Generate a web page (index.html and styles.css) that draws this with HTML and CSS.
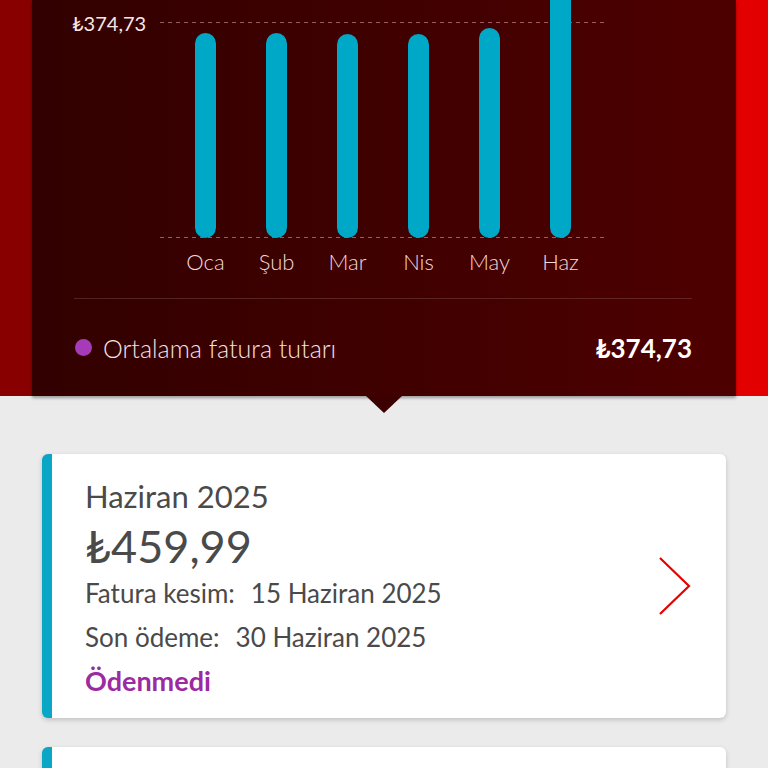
FILE: index.html
```html
<!DOCTYPE html>
<html lang="tr">
<head>
<meta charset="utf-8">
<title>Fatura</title>
<link rel="stylesheet" href="styles.css">
</head>
<body>
<div class="page">
  <section class="hero">
    <div class="strip strip-left"></div>
    <div class="panel">
      <div class="chart">
        <div class="axis-label">₺374,73</div>
        <div class="plot-wrap">
          <div class="plot">
            <div class="col"><div class="bar" style="height:205px"></div></div>
            <div class="col"><div class="bar" style="height:205px"></div></div>
            <div class="col"><div class="bar" style="height:204px"></div></div>
            <div class="col"><div class="bar" style="height:204px"></div></div>
            <div class="col"><div class="bar" style="height:210px"></div></div>
            <div class="col"><div class="bar" style="height:280px"></div></div>
          </div>
          <div class="months">
            <span>Oca</span><span>Şub</span><span>Mar</span><span>Nis</span><span>May</span><span>Haz</span>
          </div>
        </div>
      </div>
      <div class="legend">
        <div class="legend-left"><span class="dot"></span><span>Ortalama fatura tutarı</span></div>
        <div class="legend-value">₺374,73</div>
      </div>
      <div class="notch"></div>
    </div>
    <div class="strip strip-right"></div>
  </section>

  <section class="cards">
    <article class="card">
      <div class="card-body">
        <div class="card-month">Haziran 2025</div>
        <div class="card-amount">₺459,99</div>
        <div class="card-line">Fatura kesim:<span class="val">15 Haziran 2025</span></div>
        <div class="card-line">Son ödeme:<span class="val">30 Haziran 2025</span></div>
        <div class="card-status">Ödenmedi</div>
      </div>
      <svg class="chevron" width="34" height="58" viewBox="0 0 34 58" aria-hidden="true">
        <path d="M2 1 L31 29 L2 57" fill="none" stroke="#e60000" stroke-width="2.2" stroke-linejoin="miter"/>
      </svg>
    </article>
    <article class="card card-next"></article>
  </section>
</div>
</body>
</html>
```

FILE: styles.css
```css
* { box-sizing: border-box; }
html, body { margin: 0; padding: 0; }
body {
  background: #ebebeb;
  font-family: Lato, "Noto Sans", "DejaVu Sans", sans-serif;
  overflow: hidden;
  height: 768px;
}
.page { width: 768px; }

.hero {
  display: flex;
  height: 396px;
  position: relative;
  z-index: 1;
}
.strip { width: 32px; flex: none; }
.strip-left { background: #880000; }
.strip-right { background: #e30000; }

.panel {
  flex: 1;
  position: relative;
  background: linear-gradient(90deg, #320000 0%, #4e0000 100%);
  padding: 22px 44px 0 40px;
  display: flex;
  flex-direction: column;
  box-shadow: 0 2px 3px rgba(0,0,0,0.35);
}

.chart {
  display: flex;
  align-items: flex-start;
}
.axis-label {
  width: 88px;
  flex: none;
  color: #f7e6e6;
  font-size: 20px;
  line-height: 0;
  position: relative;
  top: 1px;
}
.plot-wrap { width: 445px; }
.plot {
  height: 216px;
  position: relative;
  display: grid;
  grid-template-columns: repeat(6, 71px);
  grid-template-rows: 216px;
  padding-left: 10px;
}
.plot::before, .plot::after {
  content: "";
  position: absolute;
  left: 0;
  right: 0;
  height: 1px;
  background: repeating-linear-gradient(90deg, rgba(230,170,170,0.55) 0 4px, transparent 4px 8px);
}
.plot::before { top: 0; }
.plot::after { bottom: 0; }
.col {
  display: flex;
  justify-content: center;
  align-items: flex-end;
  height: 216px;
}
.bar {
  width: 21px;
  background: #00a8c8;
  border-radius: 11px;
  position: relative;
  z-index: 1;
  flex: none;
}
.months {
  display: grid;
  grid-template-columns: repeat(6, 71px);
  padding-left: 10px;
  margin-top: 10px;
  height: 50px;
}
.months span {
  text-align: center;
  color: #f2d9d9;
  font-size: 22px;
  font-weight: 300;
  line-height: 28px;
}

.legend {
  margin-left: 2px;
  border-top: 1px solid rgba(255,255,255,0.14);
  flex: 1;
  display: flex;
  align-items: center;
  justify-content: space-between;
}
.legend-left {
  display: flex;
  align-items: center;
  gap: 11px;
  color: #f5e2e2;
  font-size: 25px;
  font-weight: 300;
}
.dot {
  width: 17px;
  height: 17px;
  border-radius: 50%;
  background: #a53bb8;
  margin-left: 1px;
}
.legend-value {
  color: #ffffff;
  font-size: 26px;
  font-weight: 700;
}
.notch {
  position: absolute;
  left: 334px;
  bottom: -17px;
  width: 0;
  height: 0;
  border-left: 18px solid transparent;
  border-right: 18px solid transparent;
  border-top: 17px solid #3c0000;
}

.cards {
  padding: 58px 42px 0 42px;
  display: flex;
  flex-direction: column;
  gap: 29px;
}
.card {
  background: #ffffff;
  border-left: 10px solid #0aa6c6;
  border-radius: 6px;
  box-shadow: 0 2px 5px rgba(0,0,0,0.18);
  display: flex;
  align-items: flex-start;
  justify-content: space-between;
  padding: 22px 34px 0 33px;
  height: 264px;
}
.card-next { height: 60px; }
.card-body {
  display: flex;
  flex-direction: column;
  color: #4a4a4a;
}
.card-month {
  font-size: 31px;
  line-height: 40px;
}
.card-amount {
  font-size: 45px;
  line-height: 50px;
  margin-top: 5px;
}
.card-line {
  font-size: 26px;
  line-height: 44px;
}
.card-line .val { margin-left: 16px; }
.card-status {
  font-size: 27px;
  line-height: 44px;
  font-weight: 700;
  color: #9c2aa0;
}
.chevron { flex: none; display: block; align-self: center; margin-top: -22px; }
```
